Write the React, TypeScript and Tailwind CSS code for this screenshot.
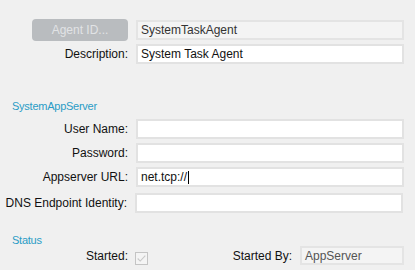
import React from 'react';

function Field({ label, value, muted, caret, className = '' }: { label: string; value?: string; muted?: boolean; caret?: boolean; className?: string }) {
  return (
    <div className={`flex items-center h-[20px] ${className}`}>
      <label className="w-[128px] shrink-0 text-right text-[12px] leading-[14px] text-[#111]">{label}</label>
      <div
        className={`ml-[8px] flex-1 h-[20px] border-2 flex items-center pl-[3px] text-[12px] leading-[14px] ${
          muted ? 'bg-[#f4f4f4] border-[#e4e4e4] text-[#333]' : 'bg-white border-[#e2e2e2] text-[#111]'
        }`}
      >
        {value}
        {caret && <span className="inline-block w-px h-[13px] bg-black ml-[1px]" />}
      </div>
    </div>
  );
}

export default function App() {
  return (
    <div className="w-[415px] h-[270px] bg-[#f0f0f0] overflow-hidden pt-[19px] pr-[11px] font-['Liberation_Sans',Arial,sans-serif]">
      {/* Agent */}
      <div className="flex items-center h-[22px]">
        <div className="w-[128px] shrink-0 flex justify-end">
          <button className="w-[96px] h-[22px] rounded-[4px] bg-[#b9bcbf] text-[#e1e3e5] text-[12px] leading-[14px]">
            Agent ID...
          </button>
        </div>
        <div className="ml-[8px] flex-1 h-[20px] border-2 border-[#e4e4e4] bg-[#f4f4f4] flex items-center pl-[3px] text-[12px] leading-[14px] text-[#333]">
          SystemTaskAgent
        </div>
      </div>
      <Field label="Description:" value="System Task Agent" className="mt-[3px]" />

      {/* SystemAppServer */}
      <p className="mt-[35px] pl-[12px] text-[11px] leading-[14px] tracking-[-0.25px] text-[#2a9cc6]">SystemAppServer</p>
      <Field label="User Name:" className="mt-[6px]" />
      <Field label="Password:" className="mt-[4px]" />
      <Field label="Appserver URL:" value="net.tcp://" caret className="mt-[4px]" />
      <div className="pr-px">
        <Field label="DNS Endpoint Identity:" className="mt-[6px] -ml-px" />
      </div>

      {/* Status */}
      <p className="mt-[21px] pl-[12px] text-[11px] leading-[12px] tracking-[-0.25px] text-[#2a9cc6]">Status</p>
      <div className="flex items-start h-[19px]">
        <label className="w-[128px] shrink-0 text-right text-[12px] leading-[20px] text-[#111]">Started:</label>
        <span className="ml-[7px] mt-[6px] w-[13px] h-[13px] border border-[#c4c4c4] bg-[#f4f4f4] flex items-center justify-center">
          <svg viewBox="0 0 13 13" className="w-[11px] h-[11px]" fill="none" stroke="#c8c8c8" strokeWidth="1.3">
            <path d="M2 6.5 L5 9.5 L11 3" />
          </svg>
        </span>
        <div className="flex-1" />
        <label className="text-[12px] leading-[20px] text-[#111]">Started By:</label>
        <div className="ml-[8px] w-[104px] h-[19px] border-2 border-[#e4e4e4] bg-[#f4f4f4] flex items-center pl-[3px] text-[12px] leading-[14px] text-[#555]">
          AppServer
        </div>
      </div>
    </div>
  );
}
